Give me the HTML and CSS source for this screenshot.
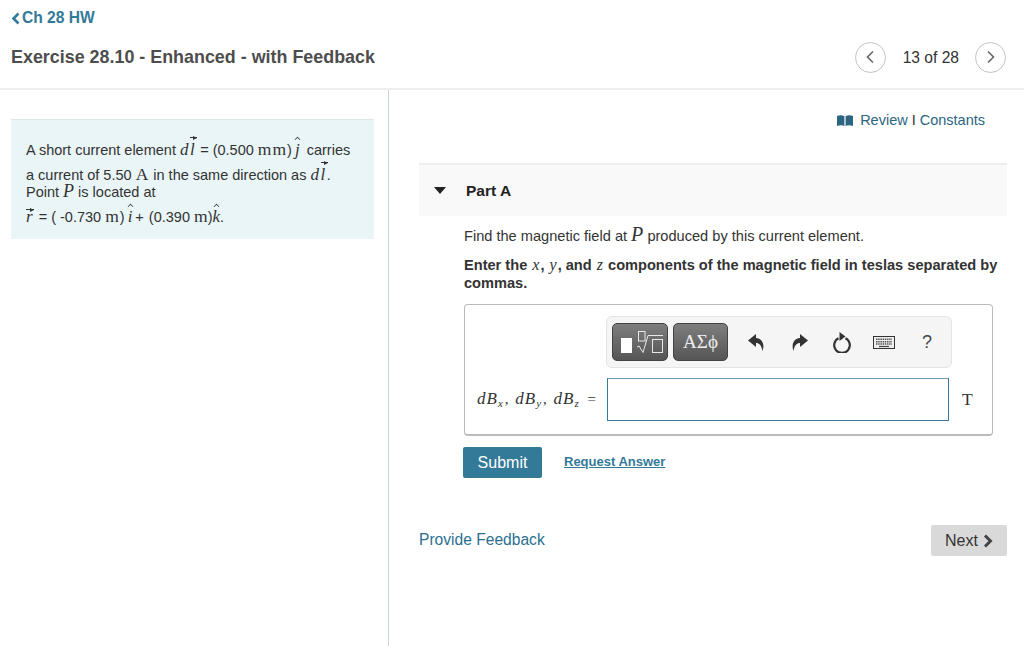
FILE: index.html
```html
<!DOCTYPE html>
<html lang="en">
<head>
<meta charset="utf-8">
<title>Exercise 28.10</title>
<link rel="stylesheet" href="styles.css">
</head>
<body>
<header class="top">
  <a class="back"><svg class="back-icon" width="9" height="13" viewBox="0 0 9 13"><path d="M7.500 1.500 2.500 6.500l5 5" fill="none" stroke="#337a99" stroke-width="2.600"/></svg>Ch 28 HW</a>
  <div class="title-row">
    <h1 class="title">Exercise 28.10 - Enhanced - with Feedback</h1>
    <nav class="pager">
      <span class="circle"><svg width="10" height="14" viewBox="0 0 10 14"><path d="M8 1.500 2.500 7 8 12.500" fill="none" stroke="#666" stroke-width="1.600"/></svg></span>
      <span class="count">13 of 28</span>
      <span class="circle"><svg width="10" height="14" viewBox="0 0 10 14"><path d="M2 1.500 7.500 7 2 12.500" fill="none" stroke="#666" stroke-width="1.600"/></svg></span>
    </nav>
  </div>
</header>
<main class="main">
  <aside class="left">
    <div class="intro">
      <p class="l1">A short current element <span class="acc"><i class="m dl">dl</i><b class="arrow"></b></span> = (0.500 <span class="r">mm</span>)<span class="acc pad"><i class="m">j</i><b class="hat"></b></span> carries</p>
      <p class="l2">a current of 5.50 <span class="r">A</span> in the same direction as <span class="acc"><i class="m dl">dl</i><b class="arrow"></b></span>.</p>
      <p class="l3">Point <i class="m mid">P</i> is located at</p>
      <p class="l4"><span class="acc rv"><i class="m">r</i><b class="arrow short"></b></span> = ( -0.730 <span class="r">m</span>)<span class="acc pad"><i class="m">i</i><b class="hat"></b></span>+ <span class="after-plus">(0.390 <span class="r unit-m">m</span>)</span><span class="acc"><i class="m">k</i><b class="hat"></b></span>.</p>
    </div>
  </aside>
  <section class="right">
    <div class="links">
      <svg class="book" width="16" height="11" viewBox="0 0 16 11"><path d="M0 1C2.500 0 5.500 0 7.400 1.200V11C5.500 10 2.500 10 0 11zM16 1C13.500 0 10.500 0 8.600 1.200V11C10.500 10 13.500 10 16 11z" fill="#2b6580"/></svg>
      <a class="link">Review</a><span class="sep">I</span><a class="link">Constants</a>
    </div>
    <div class="part-head">
      <svg class="tri" width="12" height="7" viewBox="0 0 12 7"><path d="M0 0h12L6 7z" fill="#222"/></svg>
      <span class="part-name">Part A</span>
    </div>
    <div class="part-body">
      <p class="q">Find the magnetic field at <i class="m big">P</i> produced by this current element.</p>
      <p class="instr"><span>Enter the </span><i class="m nb">x</i><span>, </span><i class="m nb">y</i><span>, and </span><i class="m nb">z</i><span> components of the magnetic field in teslas separated by</span> <span>commas.</span></p>
      <div class="answer">
        <div class="toolbar">
          <span class="tb-btn tb-a"><svg width="46" height="26" viewBox="0 0 46 26"><rect x="4" y="9" width="11" height="15" fill="#fff"/><path d="M20 18l2-1 4 6.500L31 6.500h15" fill="none" stroke="#e8e8e8"/><rect x="21.500" y="2.500" width="6.500" height="9.500" fill="none" stroke="#e8e8e8"/><rect x="35.500" y="10.500" width="10" height="13" fill="none" stroke="#e8e8e8"/></svg></span>
          <span class="tb-btn tb-b">ΑΣϕ</span>
          <svg class="ic undo" width="16" height="17" viewBox="0 0 16 17"><path d="M8 0 0 6.500 8 13V9c3 0 5.500 2 6.500 8 2.500-7-.5-12.500-6.500-13z" fill="#333"/></svg>
          <svg class="ic redo" width="16" height="17" viewBox="0 0 16 17"><path d="M8 0l8 6.500L8 13V9c-3 0-5.500 2-6.500 8C-1 10 2 4.500 8 4z" fill="#333"/></svg>
          <svg class="ic reload" width="18" height="21" viewBox="0 0 18 21"><path d="M5.500 6.200a7.800 7.800 0 1 0 7 0" fill="none" stroke="#333" stroke-width="2.200"/><path d="M6.500 0l6 4.500-6 4.500z" fill="#333"/></svg>
          <svg class="ic kbd" width="22" height="13" viewBox="0 0 22 13"><rect x=".5" y=".5" width="21" height="12" fill="#eee" stroke="#333"/><path d="M3 3.200h16M3 5.700h16M3 8h16" stroke="#555" stroke-width="1.400" stroke-dasharray="1.500 .7"/><path d="M6 10.500h10" stroke="#444" stroke-width="1.200"/></svg>
          <span class="help">?</span>
        </div>
        <div class="eq-row">
          <span class="eq"><i class="m">dB<sub>x</sub></i>, <i class="m">dB<sub>y</sub></i>, <i class="m">dB<sub>z</sub></i> =</span>
          <span class="input"></span>
          <span class="unit">T</span>
        </div>
      </div>
      <div class="actions">
        <button class="submit">Submit</button>
        <a class="request">Request Answer</a>
      </div>
    </div>
    <div class="foot">
      <a class="feedback">Provide Feedback</a>
      <button class="next">Next<svg width="10" height="14" viewBox="0 0 10 14"><path d="M2 1.500 7.500 7 2 12.500" fill="none" stroke="#444" stroke-width="3"/></svg></button>
    </div>
  </section>
</main>
</body>
</html>
```
FILE: styles.css
```css
* { box-sizing: border-box; }
html, body { margin: 0; height: 646px; overflow: hidden; background: #fff; }
body { font-family: "Liberation Sans", Arial, sans-serif; font-size: 14.6px; color: #333; }
p { margin: 0; }
.top { height: 90px; border-bottom: 2px solid #eee; padding: 10px 18px 0 11px; }
.back { display: flex; align-items: center; gap: 2px; font-size: 15.6px; font-weight: 700; color: #337a99; height: 16px; }
.title-row { display: flex; justify-content: space-between; align-items: center; margin-top: 8px; height: 46px; }
.title { margin: 0; font-size: 17.9px; font-weight: 700; color: #4d4d4d; }
.pager { display: flex; align-items: center; }
.circle { width: 31px; height: 31px; border: 1px solid #c4c4c4; border-radius: 50%; display: flex; align-items: center; justify-content: center; }
.count { font-size: 15.6px; color: #333; margin: 2px 16px 0 17px; }
.main { display: flex; height: 556px; }
.left { width: 389px; flex: none; border-right: 1px solid #ced6df; padding: 29px 14px 0 11px; }
.intro { height: 120px; background: #e9f5f7; border-top: 1px solid #dde7ea; padding: 0 15px; color: #333; font-size: 14.500px; }
.intro p { line-height: 18px; white-space: nowrap; }
.l1 { padding-top: 21px; }
.l2 { padding-top: 7px; }
.l3 { margin-top: -1px; }
.l4 { padding-top: 7px; }
.m { font-family: "Liberation Serif", serif; font-style: italic; font-size: 17px; line-height: 0; }
.dl { letter-spacing: 1.500px; }
.big { font-size: 20px; }
.mid { font-size: 18px; }
.nb { font-size: 16px; font-weight: 400; margin: 0 1px; }
.r { font-family: "Liberation Serif", serif; font-size: 17.500px; letter-spacing: 1px; line-height: 0; }
.unit-m { letter-spacing: 0; }
.acc { position: relative; display: inline-block; }
.pad { padding: 0 3px 0 3px; }
.rv { margin-right: 2px; }
.after-plus { margin-left: 1px; }
.arrow { position: absolute; right: -1px; width: 7px; top: -4px; height: 1px; background: #333; }
.arrow::after { content: ""; position: absolute; right: 0; top: -1.500px; border-left: 4px solid #333; border-top: 2px solid transparent; border-bottom: 2px solid transparent; }
.arrow.short { left: 0; right: auto; width: 8px; top: 1px; }
.hat { position: absolute; left: 50%; top: -4px; margin-left: -2px; width: 5px; height: 5px; border-left: 1px solid #333; border-top: 1px solid #333; transform: rotate(45deg) scale(.8); }
.right { flex: 1; min-width: 0; padding: 0 17px 0 30px; }
.links { display: flex; align-items: center; justify-content: flex-end; height: 20px; margin-top: 20px; padding-right: 22px; color: #2b6580; font-size: 14.500px; }
.book { margin-right: 7px; }
.link { color: #2b6580; }
.sep { margin: 0 4px; color: #333; font-weight: 400; }
.part-head { display: flex; align-items: center; height: 53px; margin-top: 33px; background: #f9f9f9; border-top: 2px solid #eee; padding-left: 15px; }
.tri { margin-right: 20px; }
.part-name { font-weight: 700; font-size: 15.500px; color: #222; }
.part-body { padding-left: 45px; }
.q { margin-top: 10px; line-height: 20px; }
.instr { margin-top: 10px; font-weight: 700; font-size: 14.600px; line-height: 18px; width: 540px; }
.answer { margin-top: 12px; height: 132px; width: 529px; border: 1px solid #bbb; border-bottom-width: 2px; border-radius: 4px; padding: 11px 40px 0 141px; }
.toolbar { display: flex; align-items: center; width: 346px; height: 52px; background: #f5f5f5; border: 1px solid #e4e4e4; border-radius: 6px; padding-left: 5px; flex: none; }
.tb-btn { display: flex; align-items: center; justify-content: center; height: 38px; background: linear-gradient(#7e7e7e, #555); border: 1px solid #444; border-radius: 5px; color: #eee; flex: none; }
.tb-a { width: 56px; }
.tb-b { width: 55px; margin-left: 5px; font-family: "Liberation Serif", serif; font-size: 19px; }
.ic { flex: none; }
.undo { margin-left: 20px; }
.redo { margin-left: 28px; }
.reload { margin-left: 25px; }
.kbd { margin-left: 22px; }
.help { margin-left: 27px; font-size: 18px; color: #444; }
.eq-row { display: flex; align-items: center; margin: 10px -42px 0 -129px; height: 43px; }
.eq { width: 130px; flex: none; white-space: nowrap; font-size: 15px; font-family: "Liberation Serif", serif; color: #333; word-spacing: 3px; }
.eq .m { font-size: 17px; letter-spacing: 1px; }
.eq sub { font-size: 11px; line-height: 0; vertical-align: -3px; margin-right: 1px; }
.input { width: 342px; height: 43px; border: 1px solid #337a99; border-top-color: #6b9cb3; background: #fff; flex: none; }
.unit { margin-left: 13px; font-family: "Liberation Serif", serif; font-size: 17.500px; }
.actions { display: flex; align-items: center; margin-top: 11px; margin-left: -1px; }
.submit { width: 79px; height: 31px; background: #337a99; color: #fff; border: 0; border-radius: 2px; font: 16px "Liberation Sans", Arial, sans-serif; }
.request { margin: -3px 0 0 22px; font-size: 13px; font-weight: 700; color: #337a99; text-decoration: underline; }
.foot { display: flex; justify-content: space-between; align-items: center; margin-top: 47px; }
.feedback { color: #2b6f8f; font-size: 15.600px; margin-top: -1px; }
.next { display: flex; align-items: center; justify-content: center; gap: 5px; width: 76px; height: 31px; background: #d9d9d9; border: 0; border-radius: 2px; color: #333; font: 16px "Liberation Sans", Arial, sans-serif; }
```
